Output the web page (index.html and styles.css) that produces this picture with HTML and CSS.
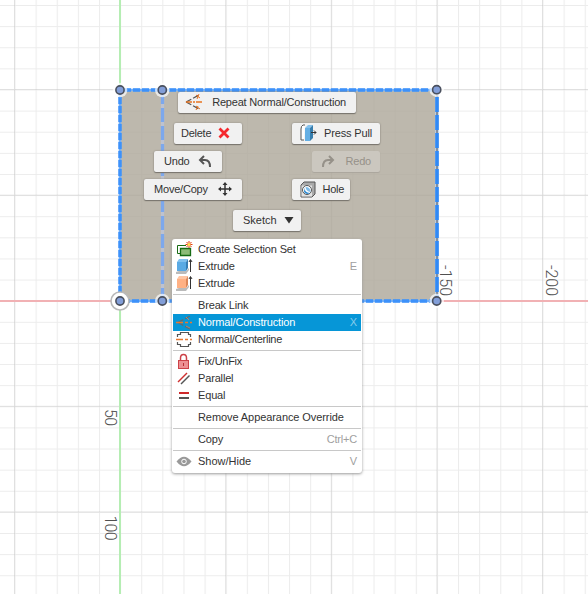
FILE: index.html
```html
<!DOCTYPE html>
<html lang="en">
<head>
<meta charset="utf-8">
<title>Sketch canvas</title>
<link rel="stylesheet" href="styles.css">
</head>
<body>
<main class="canvas">
  <svg class="scene" width="588" height="594" viewBox="0 0 588 594">
    <defs>
      <pattern id="minor" x="14.500" y="89.500" width="21.120" height="21.120" patternUnits="userSpaceOnUse">
        <path d="M0 .5H21.120M.5 0V21.120" stroke="#000" stroke-opacity=".075"/>
      </pattern>
      <pattern id="major" x="14" y="89" width="105.600" height="105.600" patternUnits="userSpaceOnUse">
        <path d="M0 .5H105.600M.5 0V105.600" stroke="#000" stroke-opacity=".09"/>
      </pattern>
      <g id="node">
        <circle r="7.300" fill="#fff" fill-opacity=".7"/>
        <circle r="4.100" fill="#829ed8" stroke="#4a505e" stroke-width="1.600"/>
      </g>
    </defs>
    <rect width="588" height="594" fill="url(#minor)"/>
    <rect width="588" height="594" fill="url(#major)"/>
    <rect x="120" y="90" width="317" height="211" fill="#aca699" fill-opacity=".8"/>
    <path d="M120 0V594" stroke="#b5edb3" stroke-width="2"/>
    <path d="M0 301H588" stroke="#f1b1b4" stroke-width="2"/>
    <path d="M162.500 90V301" stroke="#bdc2d0" stroke-width="3.300"/>
    <path d="M162.500 90V301" stroke="#7da8ec" stroke-width="3.300" stroke-dasharray="14 4"/>
    <path d="M437 90H120V301H437" fill="none" stroke="#70aef8" stroke-width="2.600"/>
    <path d="M437 90H120V301H437" fill="none" stroke="#3d91fa" stroke-width="3.400" stroke-dasharray="7 2"/>
    <path d="M437 90V301" stroke="#bfd4ec" stroke-width="3.600"/>
    <path d="M437 90V301" stroke="#464b50" stroke-width="1"/>
    <path d="M437 97V301" stroke="#3089f5" stroke-width="3.600" stroke-dasharray="15 3"/>
    <circle cx="120" cy="301" r="9" fill="#fff" stroke="#b9b9b9" stroke-width="1.600"/>
    <use href="#node" x="120" y="90"/><use href="#node" x="162.300" y="90"/><use href="#node" x="436.700" y="89.700"/>
    <use href="#node" x="120" y="301"/><use href="#node" x="162.300" y="301"/><use href="#node" x="436.700" y="301"/>
    <g class="scale">
      <text transform="translate(440 265) rotate(90)" textLength="31">-150</text>
      <text transform="translate(545.500 265) rotate(90)" textLength="31">-200</text>
      <text transform="translate(104.500 409) rotate(90)" textLength="17">50</text>
      <text transform="translate(104.500 515.500) rotate(90)" textLength="25">100</text>
    </g>
  </svg>

  <button class="pill repeat"><svg width="18" height="18"><path d="M1 9 14 2M1 9l13 7" stroke="#555" stroke-width="1.200" stroke-dasharray="6 2"/><path d="M1 9h16" stroke="#e87422" stroke-width="1.300" stroke-dasharray="6 1 2 1"/><path d="m11 2 4 3m-3 1 2-5m-3 12 4 3m-4 1 2-4" stroke="#e87422"/></svg><span>Repeat Normal/Construction</span></button>
  <button class="pill delete"><span>Delete</span><svg width="12" height="12"><path d="m1.500 1.500 9 9m0-9-9 9" stroke="#f5282d" stroke-width="2.800"/></svg></button>
  <button class="pill undo"><span>Undo</span><svg width="14" height="13"><path d="M2 5h5q5 0 5 7M6 1 2 5l4 4" fill="none" stroke="#555" stroke-width="2"/></svg></button>
  <button class="pill move"><span>Move/Copy</span><svg width="16" height="16"><path d="M8 2v12M2 8h12" stroke="#333" stroke-width="1.500"/><path d="M8 1 5.500 4h5ZM8 15l-2.500-3h5ZM1 8l3-2.500v5ZM15 8l-3-2.500v5Z" fill="#333"/></svg></button>
  <button class="pill press"><svg width="17" height="18"><path d="M5 1H3Q1 2 1 5v11h3" fill="#fff" stroke="#555"/><path d="m5 4 3-3h5l-3 3Z" fill="#85c2ed"/><path d="M5 4h5v13H5Z" fill="#65afe4"/><path d="m10 4 3-3v13l-3 3Z" fill="#367eae"/><path d="M11 8.500h5m-2-2 2 2-2 2" fill="none" stroke="#333"/></svg><span>Press Pull</span></button>
  <button class="pill redo" disabled><svg width="14" height="13"><path d="M12 5H7Q2 5 2 12M8 1l4 4-4 4" fill="none" stroke="#969189" stroke-width="2"/></svg><span>Redo</span></button>
  <button class="pill hole"><svg width="16" height="17"><path d="m1 4 3-3h11v12l-3 3H1Z" fill="#aaa" stroke="#555"/><path d="M1.500 4.500h10.500v11H1.500Z" fill="#e2e2e2"/><circle cx="7" cy="9" r="4.500" fill="#fff" stroke="#555"/><path d="M4.500 6.500q0 5 5.500 5.500-3.500 2.500-6-1Z" fill="#318bd0"/><path d="M5.500 6q5 0 5 5-4.500-.5-5-5Z" fill="#80bce8"/></svg><span>Hole</span></button>
  <button class="pill sketch"><span>Sketch</span><svg width="10" height="7"><path d="M.5 0h9L5 6.500Z" fill="#333"/></svg></button>

  <div class="menu">
    <div class="row tight"><i><svg width="18" height="17"><path d="M10 4.500H1.500v8h3" fill="none" stroke="#176b13"/><path d="M4.500 7.500h10v7h-10Z" fill="#8dbb77" stroke="#176b13" stroke-width="1.300"/><path d="M13 0v7M9.500 3.500h7m-6-2.500 5 5m0-5-5 5" stroke="#e03810"/><circle cx="13" cy="3.500" r="1.500" fill="#ffe34e"/></svg></i><span>Create Selection Set</span></div>
    <div class="row tight"><i><svg width="18" height="17"><path d="m0 14 3-1h7l3-3v2l-3 4H0Z" fill="#bbb"/><path d="m1 4 2-3h9l-2 3Z" fill="#7fc0ee"/><path d="M1 4h9v9H1Z" fill="#5aaae4"/><path d="m10 4 2-3v9l-2 3Z" fill="#367eb6"/><path d="M14.500 14V2m-1.500 2 1.500-2.500L16 4" fill="none" stroke="#333"/></svg></i><span>Extrude</span><kbd>E</kbd></div>
    <div class="row tight"><i><svg width="18" height="17"><path d="m0 14 3-1h7l3-3v2l-3 4H0Z" fill="#bbb"/><path d="m1 4 2-3h9l-2 3Z" fill="#ffc6a4"/><path d="M1 4h9v9H1Z" fill="#ffb184"/><path d="m10 4 2-3v9l-2 3Z" fill="#dc8758"/><path d="M14.500 14V2m-1.500 2 1.500-2.500L16 4" fill="none" stroke="#333"/></svg></i><span>Extrude</span></div>
    <hr>
    <div class="row tight"><i></i><span>Break Link</span></div>
    <div class="row active tight"><i><svg width="18" height="17"><path d="M2 8.500 14 2M2 8.500 14 15" stroke="#626b70" stroke-width="1.300" stroke-dasharray="6 2"/><path d="M0 8.500h16" stroke="#e87830" stroke-width="1.400" stroke-dasharray="7 2 3 2"/><path d="m10 3 3 3m-3 6 4 2" stroke="#b28369"/></svg></i><span>Normal/Construction</span><kbd>X</kbd></div>
    <div class="row centerline"><i><svg width="18" height="17"><path d="M1.500 6V3.500h3v-2h8v2h2V6M1.500 11v2.500h3v2h8v-2h2V11" fill="none" stroke="#555" stroke-width="1.200"/><path d="M0 8.500h16" stroke="#e87830" stroke-width="1.400" stroke-dasharray="7 2 3 2"/></svg></i><span>Normal/Centerline</span></div>
    <hr>
    <div class="row centerline"><i><svg width="18" height="17"><path d="M4.500 8V5a3 3.500 0 0 1 6 0v3" fill="none" stroke="#cc4248" stroke-width="1.500"/><rect x="2.500" y="7.500" width="10" height="8" fill="#ed9093" stroke="#cc4248"/><path d="M7.500 10v3" stroke="#b92f36"/></svg></i><span>Fix/UnFix</span></div>
    <div class="row tight"><i><svg width="18" height="17"><path d="m2 12 9-9" stroke="#cf3030" stroke-width="1.400"/><path d="m5 14 8.500-8.500" stroke="#555" stroke-width="1.400"/></svg></i><span>Parallel</span></div>
    <div class="row tight"><i><svg width="18" height="17"><path d="M3 6h10" stroke="#cf292b" stroke-width="2"/><path d="M3 11h10" stroke="#555" stroke-width="2"/></svg></i><span>Equal</span></div>
    <hr>
    <div class="row remove"><i></i><span>Remove Appearance Override</span></div>
    <hr>
    <div class="row tight"><i></i><span>Copy</span><kbd class="combo">Ctrl+C</kbd></div>
    <hr>
    <div class="row"><i><svg width="18" height="17"><path d="M.5 8.500Q8-1 15.500 8.500 8 18 .5 8.500Z" fill="#999"/><circle cx="8" cy="8.500" r="2.300" fill="#999" stroke="#fff"/></svg></i><span>Show/Hide</span><kbd>V</kbd></div>
  </div>
</main>
</body>
</html>
```
FILE: styles.css
```css
* { box-sizing: border-box; }
body { margin: 0; background: #fff; font: 11px "Liberation Sans", Arial, sans-serif; color: #333; }
.canvas { position: relative; width: 588px; height: 594px; overflow: hidden; }
.scene { display: block; }
.scale { font: 300 16px Roboto, sans-serif; fill: #505050; }

.pill {
  position: absolute; display: flex; align-items: center; justify-content: space-between;
  height: 21px; padding: 0 9px 1px 7px; border: 0; border-radius: 2px;
  background: #f1f1f1; color: #333; font: inherit; white-space: nowrap;
  box-shadow: 0 1px 1px #77736c, 0 0 2px #8a867e;
}
.pill svg, .row svg { flex: none; fill: none; }
.repeat { left: 178px; top: 92px; width: 178px; padding: 0 10px 1px 7px; letter-spacing: -.19px; }
.delete { left: 174px; top: 123px; width: 68px; padding-right: 12px; letter-spacing: -.25px; }
.undo { left: 154px; top: 151px; width: 68px; padding-left: 10px; padding-right: 10px; letter-spacing: -.2px; }
.move { left: 144px; top: 179px; width: 98px; padding-left: 10px; letter-spacing: -.2px; }
.press { left: 292px; top: 123px; width: 88px; padding-left: 8px; padding-right: 8px; letter-spacing: -.15px; }
.redo { left: 312px; top: 151px; width: 68px; padding-left: 9px; letter-spacing: -.2px; background: #cbc7bf; color: #969189; box-shadow: 0 1px 1px #aaa69d, 0 0 1px #b4afa6; }
.hole { left: 292px; top: 179px; width: 58px; padding-left: 8px; padding-right: 6px; letter-spacing: -.3px; }
.sketch { left: 233px; top: 210px; width: 68px; padding-left: 10px; padding-right: 7px; }

.menu {
  position: absolute; left: 172px; top: 239px; width: 190px; height: 234px;
  padding: 2px 1px; border-radius: 3px; background: #fff; box-shadow: 0 1px 3px #999;
}
.row { display: flex; align-items: center; height: 17px; padding: 0 4px 0 3px; color: #333; white-space: nowrap; }
.row span, .row kbd { padding-bottom: 2px; }
.row i { display: flex; width: 22px; }
.row kbd { margin-left: auto; font: inherit; color: #a0a0a0; }
.row kbd.combo { letter-spacing: -.2px; }
.row.tight span { letter-spacing: -.16px; }
.row.centerline span { letter-spacing: -.27px; }
.row.remove span { letter-spacing: -.08px; }
.row.active { background: #0696d7; color: #fff; }
.row.active kbd { color: #83cbeb; }
.menu hr { height: 1px; margin: 2px 0; border: 0; background: #c8c8c8; }
```
